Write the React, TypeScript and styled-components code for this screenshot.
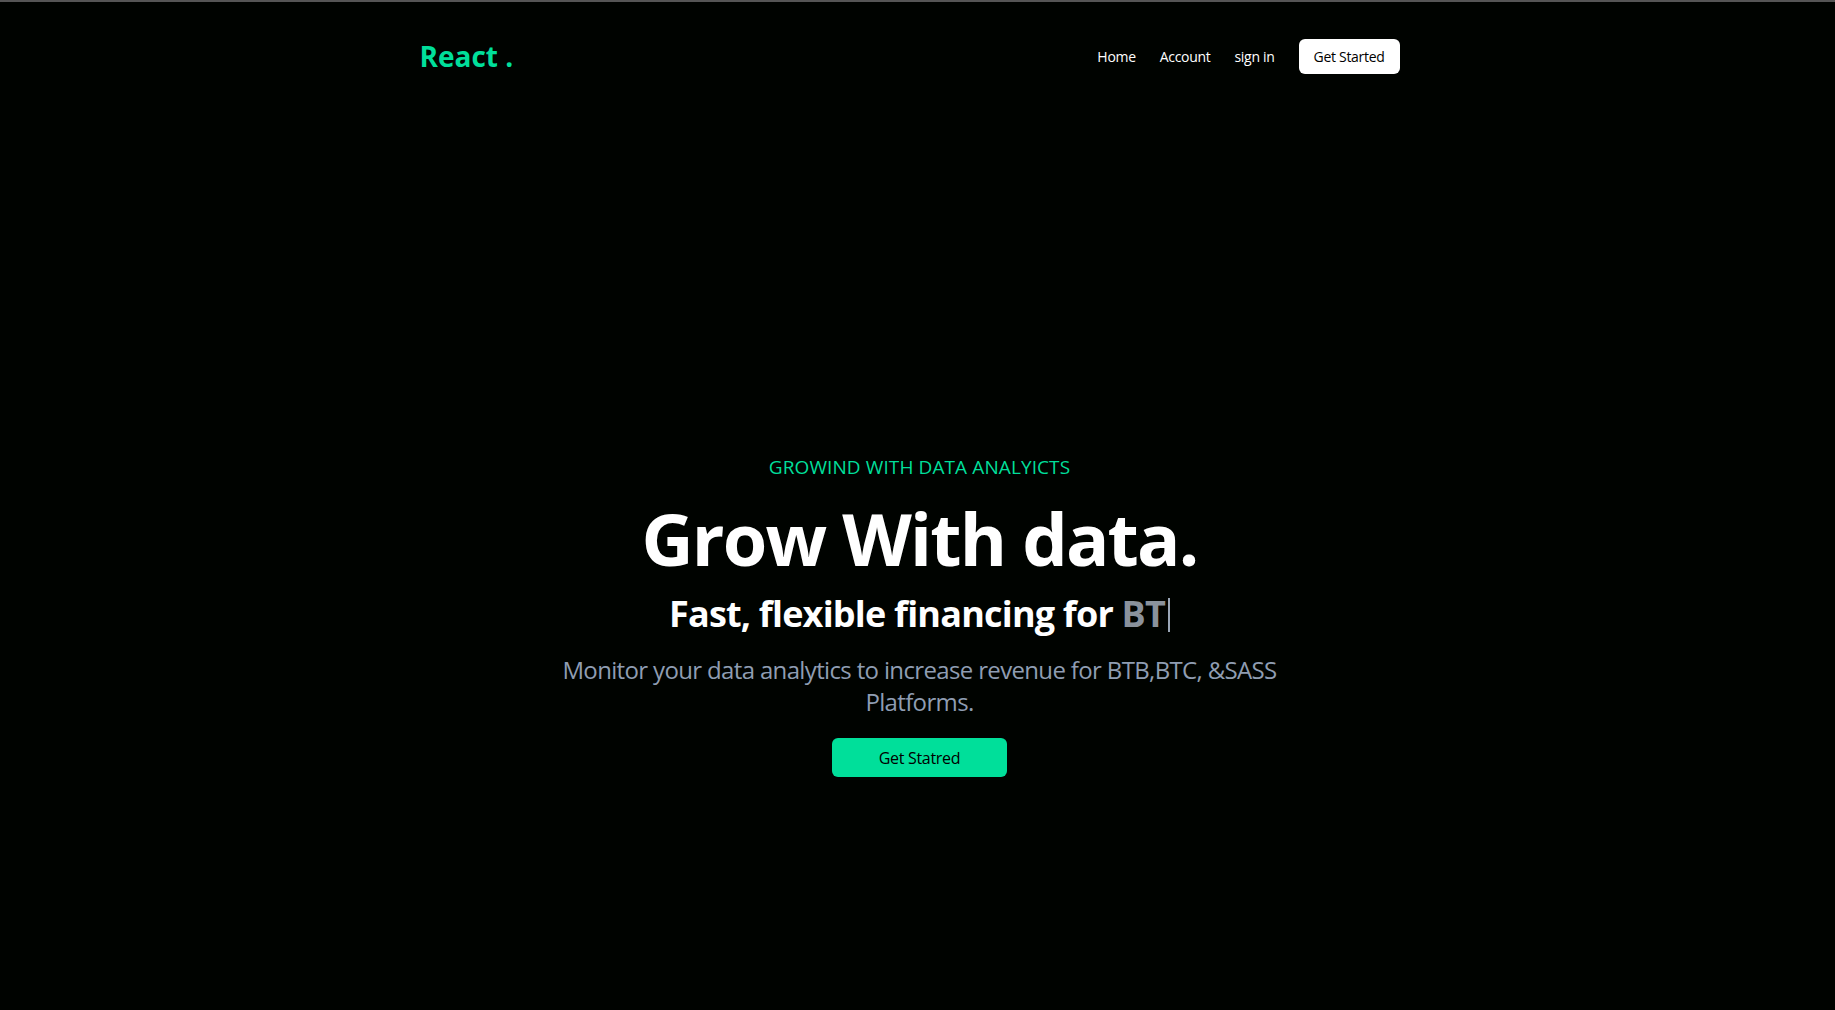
import { FC } from 'react';

import styled, { createGlobalStyle } from 'styled-components';

const GlobalStyle = createGlobalStyle`
  * {
    box-sizing: border-box;
  }
  body {
    margin: 0;
    background: #000300;
    font-family: 'Open Sans', 'Noto Sans', sans-serif;
    color: #fff;
  }
`;

const navLinks = ['Home', 'Account', 'sign in'];

const Navbar: FC = () => (
  <StyledNav>
    <Logo>React .</Logo>
    <NavList>
      {navLinks.map((link) => (
        <NavItem key={link}>{link}</NavItem>
      ))}
      <li>
        <NavButton type="button">Get Started</NavButton>
      </li>
    </NavList>
  </StyledNav>
);

const Hero: FC = () => (
  <StyledHero>
    <HeroInner>
      <Eyebrow>GROWIND WITH DATA ANALYICTS</Eyebrow>
      <Title>Grow With data.</Title>
      <Subtitle>
        Fast, flexible financing for <Typed>BT</Typed>
        <Caret aria-hidden="true" />
      </Subtitle>
      <Description>
        Monitor your data analytics to increase revenue for BTB,BTC, &amp;SASS Platforms.
      </Description>
      <CtaButton type="button">Get Statred</CtaButton>
    </HeroInner>
  </StyledHero>
);

const App: FC = () => (
  <>
    <GlobalStyle />
    <Page>
      <Navbar />
      <Hero />
    </Page>
  </>
);

const Page = styled.div`
  min-height: 100vh;
  border-top: 2px solid #555;
  display: flex;
  flex-direction: column;
`;

const StyledNav = styled.nav`
  width: 100%;
  max-width: 1000px;
  height: 108px;
  margin: 0 auto;
  padding: 0 18px 0 2px;
  display: flex;
  align-items: center;
  justify-content: space-between;
`;

const Logo = styled.h1`
  margin: 0;
  font-size: 28px;
  font-weight: 700;
  color: #00df9a;
`;

const NavList = styled.ul`
  display: flex;
  align-items: center;
  gap: 24px;
  list-style: none;
  margin: 0;
  padding: 0;
`;

const NavItem = styled.li`
  font-size: 14px;
  color: #fff;
  letter-spacing: -0.3px;
`;

const NavButton = styled.button`
  height: 35px;
  padding: 0 15px;
  border: none;
  border-radius: 6px;
  background: #fff;
  color: #000;
  font-family: inherit;
  font-size: 14px;
  letter-spacing: -0.3px;
`;

const StyledHero = styled.main`
  flex: 1;
  display: flex;
  flex-direction: column;
  justify-content: center;
  align-items: center;
  padding: 112px 0 0 4px;
  text-align: center;
`;

const HeroInner = styled.div`
  width: 100%;
  max-width: 800px;
  display: flex;
  flex-direction: column;
  align-items: center;
`;

const Eyebrow = styled.p`
  margin: 0;
  font-size: 19px;
  line-height: 24px;
  color: #00df9a;
  letter-spacing: 0.1px;
`;

const Title = styled.h1`
  margin: 23px 0 0;
  font-size: 72px;
  line-height: 72px;
  font-weight: 700;
  color: #fff;
  letter-spacing: -1.8px;
`;

const Subtitle = styled.div`
  margin-top: 20px;
  font-size: 36px;
  line-height: 40px;
  font-weight: 700;
  color: #fff;
  letter-spacing: -0.8px;
`;

const Typed = styled.span`
  color: #8a929c;
`;

const Caret = styled.span`
  display: inline-block;
  width: 2px;
  height: 34px;
  margin-left: 3px;
  vertical-align: -5px;
  background: #9aa6b6;
`;

const Description = styled.p`
  margin: 20px 0 0;
  font-size: 24px;
  line-height: 32px;
  color: #8f9db2;
  letter-spacing: -0.65px;
`;

const CtaButton = styled.button`
  width: 175px;
  height: 39px;
  margin-top: 20px;
  border: none;
  border-radius: 6px;
  background: #00df9a;
  color: #000;
  font-family: inherit;
  font-size: 16px;
  letter-spacing: -0.3px;
`;

export default App;
